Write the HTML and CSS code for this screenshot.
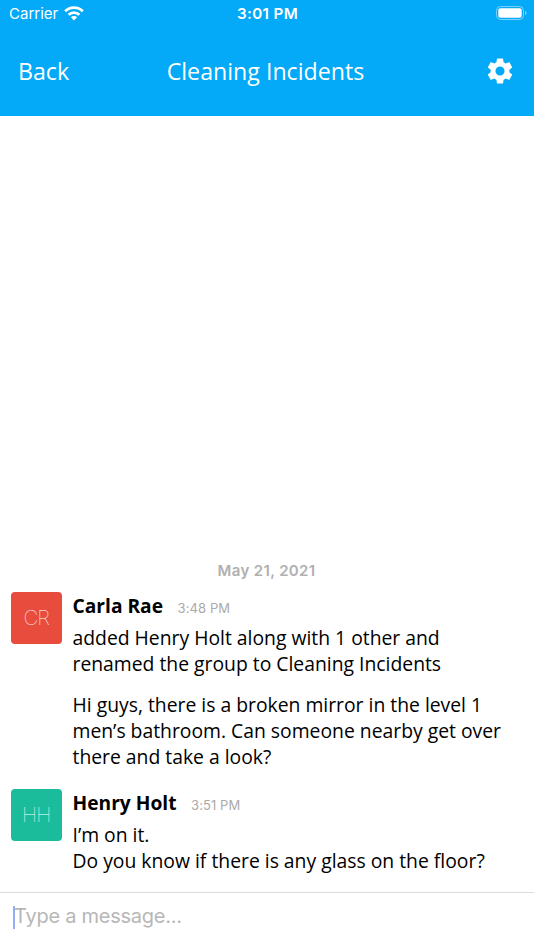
FILE: index.html
```html
<!DOCTYPE html>
<html lang="en">
<head>
<meta charset="utf-8">
<title>Cleaning Incidents</title>
<link rel="stylesheet" href="styles.css">
</head>
<body>
<header class="top">
  <div class="status">
    <div class="carrier"><span class="carrier-name">Carrier</span>
      <svg class="wifi" viewBox="0 0 20 15" width="20" height="15"><g fill="none" stroke="#fff" stroke-width="2.7"><path d="M1.2 5.2a12.5 12.5 0 0 1 17.6 0"/><path d="M4.6 8.8a7.6 7.6 0 0 1 10.8 0"/></g><path fill="#fff" d="M6.9 11.2a4.4 4.4 0 0 1 6.2 0L10 14.4z"/></svg>
    </div>
    <div class="clock">3:01 PM</div>
    <svg class="battery" viewBox="0 0 31 15" width="31" height="15"><rect x=".5" y=".5" width="27" height="13" rx="4" fill="none" stroke="#fff" stroke-opacity=".45"/><rect x="2.3" y="2.3" width="23.4" height="9.4" rx="2" fill="#fff"/><path d="M29.2 4.8q1.5.7 1.5 2.2t-1.5 2.2z" fill="#fff" fill-opacity=".5"/></svg>
  </div>
  <nav class="nav">
    <a class="back">Back</a>
    <h1 class="title">Cleaning Incidents</h1>
    <svg class="gear" viewBox="2 2 20 20" width="26" height="26"><path fill="#fff" d="M19.14 12.94c.04-.3.06-.61.06-.94 0-.32-.02-.64-.07-.94l2.03-1.58c.18-.14.23-.41.12-.61l-1.92-3.32c-.12-.22-.37-.29-.59-.22l-2.39.96c-.5-.38-1.03-.7-1.62-.94l-.36-2.54c-.04-.24-.24-.41-.48-.41h-3.84c-.24 0-.43.17-.47.41l-.36 2.54c-.59.24-1.13.57-1.62.94l-2.39-.96c-.22-.08-.47 0-.59.22L2.74 8.87c-.12.21-.08.47.12.61l2.03 1.58c-.05.3-.09.63-.09.94s.02.64.07.94l-2.03 1.58c-.18.14-.23.41-.12.61l1.92 3.32c.12.22.37.29.59.22l2.39-.96c.5.38 1.03.7 1.62.94l.36 2.54c.05.24.24.41.48.41h3.84c.24 0 .44-.17.47-.41l.36-2.54c.59-.24 1.13-.56 1.62-.94l2.39.96c.22.08.47 0 .59-.22l1.92-3.32c.12-.22.07-.47-.12-.61zM12 15.5A3.5 3.5 0 1 1 12 8.5a3.5 3.5 0 0 1 0 7z"/></svg>
  </nav>
</header>
<main class="chat">
  <div class="date">May 21, 2021</div>
  <article class="message">
    <div class="avatar red">CR</div>
    <div class="body">
      <div class="meta"><strong class="name">Carla Rae</strong><time class="time">3:48 PM</time></div>
      <p class="text"><span>added Henry Holt along with 1 other and</span><br><span>renamed the group to Cleaning Incidents</span></p>
      <p class="text follow"><span>Hi guys, there is a broken mirror in the level 1</span><br><span>men’s bathroom. Can someone nearby get over</span><br><span>there and take a look?</span></p>
    </div>
  </article>
  <article class="message">
    <div class="avatar green">HH</div>
    <div class="body">
      <div class="meta"><strong class="name">Henry Holt</strong><time class="time">3:51 PM</time></div>
      <p class="text"><span>I’m on it.</span><br><span>Do you know if there is any glass on the floor?</span></p>
    </div>
  </article>
</main>
<footer class="composer"><span class="caret"></span><span class="placeholder">Type a message...</span></footer>
</body>
</html>
```
FILE: styles.css
```css
* { box-sizing: border-box; }
body { margin: 0; width: 534px; height: 950px; display: flex; flex-direction: column; overflow: hidden; background: #fff; color: #000; font-family: "Open Sans", sans-serif; }
.top { height: 116.4px; flex: none; background: #04a9f7; color: #fff; }
.status { height: 28px; display: grid; grid-template-columns: 1fr auto 1fr; align-items: center; padding: 0 7px 0 9px; font: 15px/28px Inter, sans-serif; }
.carrier { display: flex; align-items: center; gap: 6px; }
.wifi { margin-top: -2px; }
.clock { font-weight: 600; font-size: 15.2px; letter-spacing: .35px; margin-left: -1px; }
.battery { justify-self: end; margin-top: -1px; }
.nav { height: 88px; display: grid; grid-template-columns: 1fr auto 1fr; align-items: center; padding: 0 21px 0 18px; }
.back, .title { font-size: 23.2px; font-weight: 400; line-height: 32px; margin: 0 0 2px; }
.gear { justify-self: end; margin-top: -2px; }
.chat { flex: 1; display: flex; flex-direction: column; justify-content: flex-end; padding: 0 10.5px 17.6px; }
.date { text-align: center; color: #b0b0b0; font: 600 15px/20px Inter, sans-serif; letter-spacing: .36px; margin: 0 0 11px -1px; }
.message { display: flex; gap: 10.5px; }
.message + .message { margin-top: 19px; }
.avatar { width: 51.5px; height: 51.5px; flex: none; border-radius: 4px; color: #fff; font: 100 20.5px/51px Inter, sans-serif; letter-spacing: -.9px; text-align: center; }
.red { background: #e84c3d; }
.green { background: #1abc9c; }
.meta { height: 29px; display: flex; align-items: baseline; gap: 14.5px; line-height: 28px; }
.name { font-size: 19.2px; font-weight: 700; }
.time { font: 13px/28px Inter, sans-serif; color: #aaa; letter-spacing: .1px; }
.text { margin: 4px 0 0; font-size: 19.33px; line-height: 26px; white-space: nowrap; }
.follow { margin-top: 15px; }
.composer { height: 58px; flex: none; border-top: 1px solid #dcdcdc; padding: 11px 13px; display: flex; align-items: flex-start; }
.caret { width: 2px; height: 23px; background: #93adfb; margin-top: 2px; }
.placeholder { color: #b7b7b7; font: 20px/24px Inter, sans-serif; letter-spacing: -.25px; margin-left: -1px; }
```
